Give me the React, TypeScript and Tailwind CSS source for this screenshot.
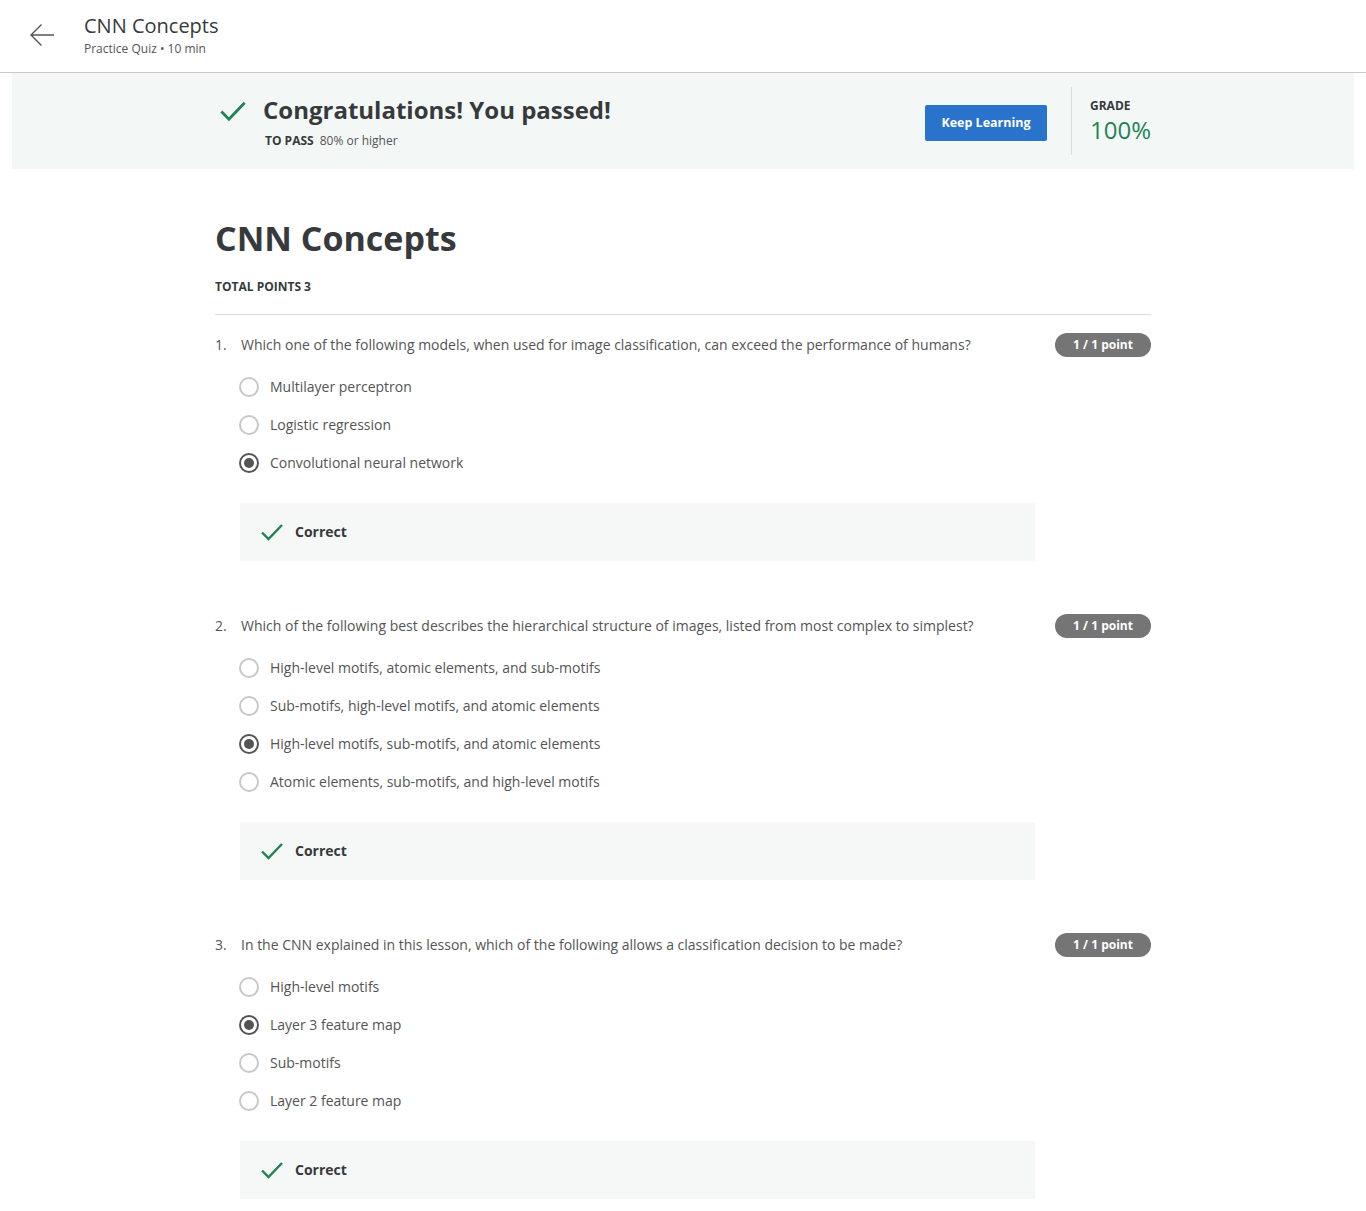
import React from 'react';

type Question = {
  text: string;
  options: string[];
  selected: number;
};

const questions: Question[] = [
  {
    text: 'Which one of the following models, when used for image classification, can exceed the performance of humans?',
    options: ['Multilayer perceptron', 'Logistic regression', 'Convolutional neural network'],
    selected: 2,
  },
  {
    text: 'Which of the following best describes the hierarchical structure of images, listed from most complex to simplest?',
    options: [
      'High-level motifs, atomic elements, and sub-motifs',
      'Sub-motifs, high-level motifs, and atomic elements',
      'High-level motifs, sub-motifs, and atomic elements',
      'Atomic elements, sub-motifs, and high-level motifs',
    ],
    selected: 2,
  },
  {
    text: 'In the CNN explained in this lesson, which of the following allows a classification decision to be made?',
    options: ['High-level motifs', 'Layer 3 feature map', 'Sub-motifs', 'Layer 2 feature map'],
    selected: 1,
  },
];

function Check({ size = 24 }: { size?: number }) {
  return (
    <svg width={size} height={size} viewBox="0 0 24 24" fill="none">
      <path d="M2 12.5l6.5 6.5L22 5" stroke="#1f8354" strokeWidth="2.4" />
    </svg>
  );
}

function Radio({ checked }: { checked: boolean }) {
  return checked ? (
    <span className="flex h-5 w-5 items-center justify-center rounded-full border-2 border-[#555]">
      <span className="h-[10px] w-[10px] rounded-full bg-[#555]" />
    </span>
  ) : (
    <span className="h-5 w-5 rounded-full border-2 border-[#c8c8c8]" />
  );
}

function QuestionBlock({ q, index }: { q: Question; index: number }) {
  return (
    <div className="mb-[53px]">
      <div className="flex h-6 items-center justify-between">
        <p className="flex text-sm text-[#545454]">
          <span className="w-[26px]">{index + 1}.</span>
          <span>{q.text}</span>
        </p>
        <span className="flex h-6 w-24 items-center justify-center rounded-full bg-[#757575] text-xs font-bold text-white">
          1 / 1 point
        </span>
      </div>
      <ul className="mt-[11px] pl-6">
        {q.options.map((opt, i) => (
          <li key={i} className="flex h-[38px] items-center gap-[11px] text-sm text-[#545454]">
            <Radio checked={i === q.selected} />
            <span>{opt}</span>
          </li>
        ))}
      </ul>
      <div className="ml-[25px] mt-[21px] flex h-[58px] w-[795px] items-center gap-[11px] bg-[#f5f8f7] pl-5">
        <Check size={24} />
        <span className="text-sm font-bold text-[#373a3c]">Correct</span>
      </div>
    </div>
  );
}

export default function App() {
  return (
    <div className="min-h-[1211px] bg-white font-['Open_Sans',sans-serif] text-[#373a3c]">
      <header className="flex h-[73px] items-center border-b border-[#c8c8c8] pb-[2px]">
        <div className="flex w-[84px] justify-center">
          <svg width="26" height="24" viewBox="0 0 26 24" fill="none">
            <path d="M25 12H2M12.5 1.5L2 12l10.5 10.5" stroke="#555" strokeWidth="1.4" />
          </svg>
        </div>
        <div className="flex flex-col">
          <span className="text-xl leading-6 text-[#373a3c]">CNN Concepts</span>
          <span className="mt-[3px] text-xs text-[#555]">Practice Quiz • 10 min</span>
        </div>
      </header>

      <section className="mx-3 flex h-24 items-center bg-[#f3f8f6]">
        <div className="mx-auto flex w-[936px] items-center">
          <div className="flex flex-1 items-start gap-4">
            <div className="mt-[3px] pl-1">
              <Check size={28} />
            </div>
            <div>
              <h2 className="text-2xl font-bold leading-8 text-[#373a3c]">Congratulations! You passed!</h2>
              <p className="mt-[7px] text-xs text-[#555]">
                <span className="ml-[2px] mr-[6px] font-bold text-[#373a3c]">TO PASS</span>80% or higher
              </p>
            </div>
          </div>
          <button className="mt-1 h-9 w-[122px] rounded-[2px] bg-[#2a73cc] text-[12.5px] font-bold text-white">
            Keep Learning
          </button>
          <div className="ml-6 h-[68px] w-px bg-[#dcdcdc]" />
          <div className="ml-[18px] w-[61px]">
            <div className="text-xs font-bold leading-4 text-[#373a3c]">GRADE</div>
            <div className="mt-[2px] text-2xl leading-7 text-[#1f8354]">100%</div>
          </div>
        </div>
      </section>

      <main className="mx-auto w-[936px] pt-[47px]">
        <h1 className="text-[34px] font-bold leading-[44px] text-[#373a3c]">CNN Concepts</h1>
        <p className="mt-[19px] text-xs font-bold text-[#373a3c]">TOTAL POINTS 3</p>
        <hr className="mb-[18px] mt-[19px] border-[#dcdcdc]" />
        {questions.map((q, i) => (
          <QuestionBlock key={i} q={q} index={i} />
        ))}
      </main>
    </div>
  );
}
